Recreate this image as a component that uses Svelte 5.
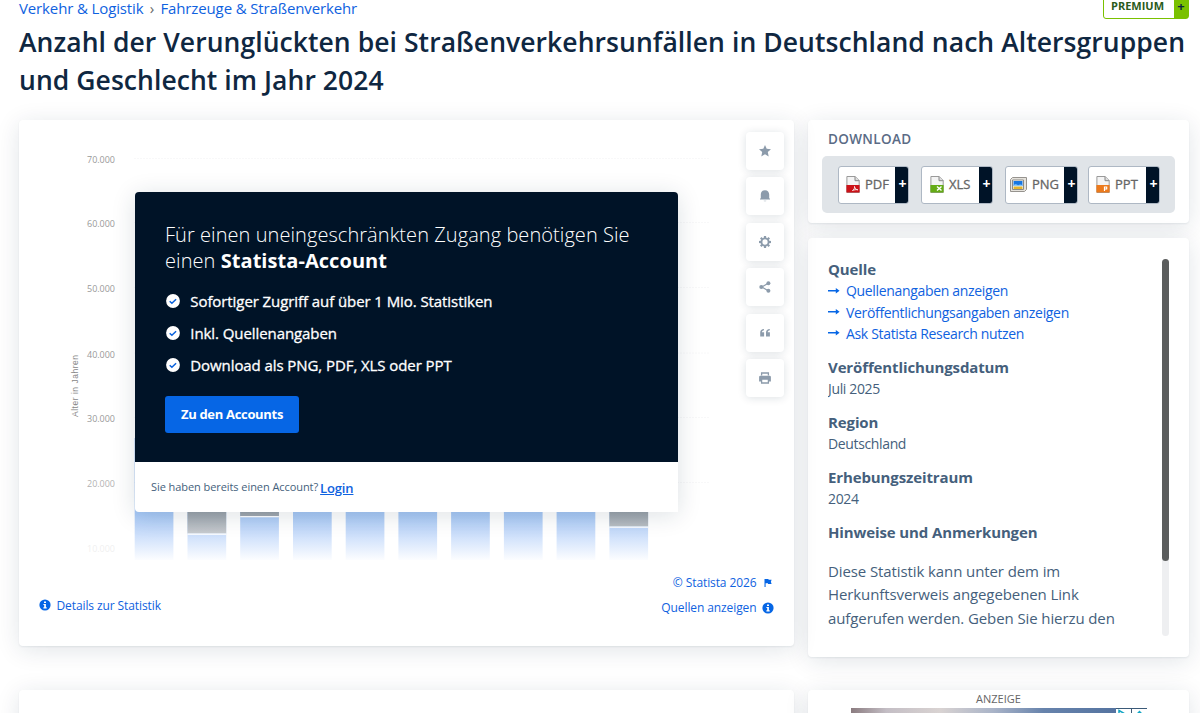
<script lang="ts">
  type Bar = { x: number; split: number; top: number };

  const ticks = [
    { label: "70.000", y: 40 },
    { label: "60.000", y: 104 },
    { label: "50.000", y: 169 },
    { label: "40.000", y: 234.5 },
    { label: "30.000", y: 299 },
    { label: "20.000", y: 364 },
    { label: "10.000", y: 428.5 },
  ];

  // split: end of the upper (grey) segment, 0 when it lies behind the dialog
  const bars: Bar[] = [
    { x: 115.7, split: 0, top: 318 },
    { x: 168.5, split: 413.5, top: 340 },
    { x: 221.2, split: 396, top: 340 },
    { x: 274, split: 0, top: 340 },
    { x: 326.7, split: 0, top: 340 },
    { x: 379.4, split: 0, top: 340 },
    { x: 432.1, split: 0, top: 340 },
    { x: 484.9, split: 0, top: 340 },
    { x: 537.6, split: 0, top: 340 },
    { x: 590.4, split: 406.5, top: 340 },
  ];

  const tools = ["star", "bell", "gear", "share", "quote", "print"];
  const formats = [
    { name: "PDF", color: "#cc1218", cls: "pdf" },
    { name: "XLS", color: "#65ab16", cls: "xls" },
    { name: "PNG", color: "#2e7fd6", cls: "png" },
    { name: "PPT", color: "#ec7a1c", cls: "ppt" },
  ];
  const benefits = [
    "Sofortiger Zugriff auf über 1 Mio. Statistiken",
    "Inkl. Quellenangaben",
    "Download als PNG, PDF, XLS oder PPT",
  ];
  const sourceLinks = [
    "Quellenangaben anzeigen",
    "Veröffentlichungsangaben anzeigen",
    "Ask Statista Research nutzen",
  ];
  const facts = [
    { title: "Veröffentlichungsdatum", value: "Juli 2025" },
    { title: "Region", value: "Deutschland" },
    { title: "Erhebungszeitraum", value: "2024" },
  ];
</script>

{#snippet info()}
  <svg width="12" height="12" viewBox="0 0 12 12">
    <circle cx="6" cy="6" r="5.6" fill="#0666e5" />
    <path d="M5 2.4h2v1.6H5zM4.4 5h2.5v3.2h.8v1.2H4.4V8.2h.8V6.1h-.8z" fill="#fff" />
  </svg>
{/snippet}

<div class="page">
  <header>
    <div class="top-row">
      <nav class="breadcrumb">
        <a href="#verkehr">Verkehr &amp; Logistik</a>
        <span class="sep">›</span>
        <a href="#fahrzeuge">Fahrzeuge &amp; Straßenverkehr</a>
      </nav>
      <div class="premium"><span class="premium-text">PREMIUM</span><span class="premium-plus">+</span></div>
    </div>
    <h1>
      Anzahl der Verunglückten bei Straßenverkehrsunfällen in Deutschland nach Altersgruppen<br />
      und Geschlecht im Jahr 2024
    </h1>
  </header>

  <div class="columns">
    <main>
      <section class="card chart-card">
        <svg class="chart" width="775" height="442" viewBox="0 0 775 442">
          <defs>
            <linearGradient id="upper" gradientUnits="userSpaceOnUse" x1="0" y1="318" x2="0" y2="440">
              <stop offset="0" stop-color="#5f6b77" />
              <stop offset="0.6" stop-color="#98a0a8" />
              <stop offset="1" stop-color="#fff" />
            </linearGradient>
            <linearGradient id="lower" gradientUnits="userSpaceOnUse" x1="0" y1="318" x2="0" y2="440">
              <stop offset="0" stop-color="#6fa4ea" />
              <stop offset="0.62" stop-color="#a7c8f5" />
              <stop offset="0.8" stop-color="#cee0fb" />
              <stop offset="1" stop-color="#fcfdff" />
            </linearGradient>
          </defs>
          {#each ticks as t, i}
            {#if i < 6}
              <line x1="115" x2="690" y1={t.y - 1.5} y2={t.y - 1.5} stroke="#f8f8f9" stroke-dasharray="2 1" />
            {/if}
            <text class="tick" x="96" y={t.y + 3.3} textLength="28" opacity={i < 5 ? 1 : i === 5 ? 0.75 : 0.15}>{t.label}</text>
          {/each}
          <text class="axis" transform="translate(58.5 297) rotate(-90)" textLength="62">Alter in Jahren</text>
          {#each bars as b}
            <rect x={b.x} y={b.top} width="38.7" height={440 - b.top} fill="url(#lower)" />
            {#if b.split}
              <rect x={b.x} y={b.top} width="38.7" height={b.split - b.top} fill="url(#upper)" />
              <rect x={b.x} y={b.split} width="38.7" height="1.3" fill="#fff" />
            {/if}
          {/each}
        </svg>

        <div class="tools">
          {#each tools as tool}
            <button class="tool" aria-label={tool}>
              <svg width="14" height="14" viewBox="0 0 14 14" fill="#8c9bab">
                {#if tool === "star"}
                  <path d="M7 1 8.700 4.800l4.300.4-3.200 2.900.9 4.300L7 10.200l-3.700 2.200.9-4.300L1 5.200l4.300-.4z" />
                {:else if tool === "bell"}
                  <path d="M7 1.200c-2.700 0-4.200 1.900-4.200 4.400v3.300l-.8 1v.5h10v-.5l-.8-1V5.600C11.200 3.100 9.700 1.200 7 1.200z" />
                  <path d="M5.600 11.400h2.800a1.400 1.100 0 0 1-2.800 0z" opacity=".45" />
                {:else if tool === "gear"}
                  <circle cx="7" cy="7" r="3.600" fill="none" stroke="#8c9bab" stroke-width="1.900" />
                  {#each [0, 45, 90, 135, 180, 225, 270, 315] as a}
                    <rect x="5.900" y="1" width="2.200" height="2" transform="rotate({a} 7 7)" />
                  {/each}
                {:else if tool === "share"}
                  <path d="M10.200 3.300 3.800 7l6.400 3.700" fill="none" stroke="#8c9bab" stroke-width="1.300" />
                  <circle cx="10.400" cy="3.200" r="2" /><circle cx="3.300" cy="7" r="2" /><circle cx="10.400" cy="10.800" r="2" />
                {:else if tool === "quote"}
                  <path d="M6 3v1.200C4.700 4.400 4 5.100 3.900 6.300h2.200V10.500H2.200V6.500C2.200 4.300 3.700 3.100 6 3zM11.800 3v1.200c-1.300.2-2 .9-2.100 2.100h2.200v4.200H8V6.500C8 4.300 9.500 3.100 11.800 3z" />
                {:else}
                  <path d="M3.600 4.400V2h6.800v2.400" fill="none" stroke="#8c9bab" stroke-width="1.300" />
                  <path d="M2.500 4.700h9a1.400 1.400 0 0 1 1.400 1.400v4.400h-2.200V7.900H3.300v2.600H1.100V6.100a1.400 1.400 0 0 1 1.400-1.400z" />
                  <path d="M3.600 8h6.800v4H3.600z" fill="none" stroke="#8c9bab" stroke-width="1.300" />
                {/if}
              </svg>
            </button>
          {/each}
        </div>

        <div class="dialog">
          <div class="dialog-main">
            <p class="lead">Für einen uneingeschränkten Zugang benötigen Sie<br />einen <b>Statista-Account</b></p>
            <ul>
              {#each benefits as benefit}
                <li>
                  <svg width="14" height="14" viewBox="0 0 14 14">
                    <circle cx="7" cy="7" r="6.900" fill="#fff" />
                    <path d="m3.700 7.200 2.200 2.100 4.200-4.100" fill="none" stroke="#0b62dc" stroke-width="1.500" />
                  </svg>
                  {benefit}
                </li>
              {/each}
            </ul>
            <button class="cta">Zu den Accounts</button>
          </div>
          <div class="dialog-foot">
            <span>Sie haben bereits einen Account?</span>
            <a href="#login">Login</a>
          </div>
        </div>

        <div class="chart-foot">
          <a class="details" href="#details">{@render info()} Details zur Statistik</a>
          <div class="chart-meta">
            <a href="#copyright">
              © Statista 2026
              <svg width="12" height="12" viewBox="0 0 12 12"><path d="M2.500 2h4v.8H9.600L8.900 4.800l.7 2.300H6v-.8H3.600V10H2.500z" fill="#0666e5" /></svg>
            </a>
            <a href="#quellen">Quellen anzeigen {@render info()}</a>
          </div>
        </div>
      </section>
      <section class="card next-card"></section>
    </main>

    <aside>
      <section class="card download">
        <h2>DOWNLOAD</h2>
        <div class="formats">
          {#each formats as f}
            <button class="format {f.cls}">
              {#if f.name === "PNG"}
                <svg width="17" height="15" viewBox="0 0 17 15">
                  <path d="M2.500.500h14v12l-2 2H.500v-12z" fill="#e5e2dc" stroke="#96938e" />
                  <path d="M2.500 3h11v9.500h-11z" fill="#fff" stroke="#8b8b86" />
                  <path d="M3.500 4h9v5h-9z" fill="#1676e2" />
                  <path d="M3.500 8.500c2-2 3-1 4.500-.300 1.500-1 3-1 4.500 0v1h-9z" fill="#8cc7f7" />
                  <path d="M3.500 9.500h9V12h-9z" fill="#e6b52c" />
                </svg>
              {:else}
                <svg width="14" height="17" viewBox="0 0 14 17">
                  <path d="M.900.500h8.300l4 4v12H.900z" fill="#f4f4f4" stroke="#9a9a9a" />
                  <path d="M9 .500v4.200h4.200" fill="#ddd" stroke="#888" />
                  <path d="M.400 9h13.200v7.500H.400z" fill={f.color} />
                  {#if f.name === "PDF"}
                    <path d="M6.500 14.500c1.800-1.200 2.200-2.500 2-4 .4 2 1.500 3 3.300 3.300-2-.3-3.500 0-5.300.7z" fill="none" stroke="#fff" stroke-width=".9" />
                  {:else if f.name === "XLS"}
                    <path d="m7 10.500 4.500 4m0-4L7 14.500" stroke="#fff" stroke-width="1.400" />
                  {:else}
                    <path d="M8.500 15v-4h2.200v2H8.500" fill="none" stroke="#fff" stroke-width="1.200" />
                  {/if}
                </svg>
              {/if}
              <span class="format-name">{f.name}</span>
              <span class="format-plus">+</span>
            </button>
          {/each}
        </div>
      </section>

      <section class="card facts">
        <div class="facts-scroll">
          <h3>Quelle</h3>
          <ul class="links">
            {#each sourceLinks as link}
              <li>
                <svg width="12" height="8" viewBox="0 0 12 8">
                  <path d="M0 3h7.800V1.100L11.600 3.800 7.800 6.500V4.600H0z" fill="#0666e5" />
                </svg>
                <a href="#quelle">{link}</a>
              </li>
            {/each}
          </ul>
          {#each facts as fact}
            <h3>{fact.title}</h3>
            <p class="value">{fact.value}</p>
          {/each}
          <h3>Hinweise und Anmerkungen</h3>
          <p class="note">Diese Statistik kann unter dem im<br />Herkunftsverweis angegebenen Link<br />aufgerufen werden. Geben Sie hierzu den<br />Code 46241-0010 in das Suchmenü ein.</p>
        </div>
        <div class="scrollbar"><div class="thumb"></div></div>
      </section>

      <section class="card ad">
        <span class="ad-label">ANZEIGE</span>
        <div class="ad-image">
          <svg width="31" height="10" viewBox="0 0 31 10">
            <path d="M0 0h31v10H0z" fill="#fff" />
            <path d="M0 .500h31M15.500 0v10" stroke="#3b5a78" />
            <path d="m3 2.500 7 4-7 4z" fill="none" stroke="#14a5c4" stroke-width="1.500" />
            <path d="M21 6.500 23.500 4 26 6.500" fill="none" stroke="#14a5c4" stroke-width="2" />
          </svg>
        </div>
      </section>
    </aside>
  </div>
</div>

<style>
  :global(body) { background: #fff; overflow: hidden; }
  .page {
    height: 713px; overflow: hidden; box-sizing: border-box; padding: 0 11px 0 19px;
    font-family: "Open Sans", "Liberation Sans", sans-serif; color: #455f7c; background: #fff;
  }
  a { color: #0f62e0; text-decoration: none; }
  h1, h2, h3, p, ul { margin: 0; padding: 0; }
  ul { list-style: none; }
  button { font-family: inherit; padding: 0; border: 0; }
  svg { display: block; flex: none; }

  header { height: 120px; }
  .top-row { display: flex; justify-content: space-between; height: 24px; }
  .breadcrumb { display: flex; font-size: 15px; line-height: 17px; letter-spacing: -0.13px; white-space: nowrap; }
  .sep { width: 17px; text-align: center; color: #666; }
  .premium {
    display: flex; box-sizing: border-box; width: 86px; height: 26px; margin-top: -7px;
    border: 1px solid #7ac100; border-radius: 3px; font-size: 11px; font-weight: 700; line-height: 24px; color: #2a5b1c;
  }
  .premium-text { flex: 1; padding-left: 7px; }
  .premium-plus { width: 14px; background: #7ac100; color: #0f2741; font-size: 13px; text-align: center; }
  h1 { font-size: 26.5px; font-weight: 600; line-height: 37.5px; letter-spacing: 0.06px; color: #0f2741; white-space: nowrap; }

  .columns { display: flex; gap: 14px; }
  main { width: 775px; display: flex; flex-direction: column; gap: 44px; }
  aside { width: 381px; display: flex; flex-direction: column; }
  .card {
    background: #fff; border-radius: 4px; box-sizing: border-box;
    box-shadow: 0 1px 2px rgba(15, 39, 65, 0.07), 0 4px 24px rgba(15, 39, 65, 0.12);
  }

  .chart-card { position: relative; height: 526px; }
  .tick { font-size: 9px; fill: #999; text-anchor: end; }
  .axis { font-family: "Liberation Sans", sans-serif; font-size: 8.5px; fill: #888; }
  .tools { position: absolute; top: 12px; right: 10px; display: flex; flex-direction: column; gap: 7.4px; }
  .tool {
    width: 38px; height: 38px; display: grid; place-items: center; background: #fff;
    border-radius: 4px; box-shadow: 0 1px 8px rgba(15, 39, 65, 0.14);
  }

  .dialog {
    position: absolute; left: 116px; top: 71.5px; width: 543px; background: #fff;
    border-radius: 4px 4px 0 4px; box-shadow: 0 3px 24px rgba(15, 39, 65, 0.14);
  }
  .dialog-main { height: 270.5px; box-sizing: border-box; padding: 30px; background: #001327; color: #fff; border-radius: 4px 4px 0 0; }
  .lead { font-size: 20px; font-weight: 300; line-height: 26px; letter-spacing: 0.06px; white-space: nowrap; }
  .lead b { font-weight: 700; }
  .dialog ul { margin-top: 12px; }
  .dialog li {
    display: flex; align-items: center; gap: 10.3px; height: 31.7px; padding-left: 1px;
    font-size: 15px; letter-spacing: -0.08px; -webkit-text-stroke: 0.3px #fff;
  }
  .cta {
    display: block; width: 134px; height: 37px; margin-top: 15.5px; padding-bottom: 2px;
    background: #0666e5; color: #fff; border-radius: 3px; font-size: 13px; font-weight: 700; letter-spacing: -0.32px;
  }
  .dialog-foot { display: flex; align-items: center; gap: 2px; height: 50px; padding-left: 16px; font-size: 11px; color: #455f7c; }
  .dialog-foot span { letter-spacing: -0.07px; padding-bottom: 1px; }
  .dialog-foot a { font-size: 13px; font-weight: 600; letter-spacing: -0.15px; text-decoration: underline; padding-top: 2px; }

  .chart-foot { display: flex; justify-content: space-between; align-items: flex-end; padding: 8px 20px 0; font-size: 12px; line-height: 25px; letter-spacing: -0.1px; }
  .chart-foot a { display: flex; align-items: center; justify-content: flex-end; gap: 5.5px; }
  .details { margin-bottom: 2.5px; }
  .next-card { height: 80px; }

  .download { height: 103px; padding: 9px 14px; }
  h2 { margin-left: 6px; font-size: 13.5px; line-height: 20px; font-weight: 600; color: #5a6b85; letter-spacing: 0.35px; }
  .formats { display: flex; align-items: center; gap: 12px; height: 57px; margin-top: 7px; padding-left: 16px; background: #e0e4e8; border-radius: 5px; }
  .format {
    display: flex; align-items: center; box-sizing: border-box; height: 38px; padding-left: 7px;
    background: #fff; border: 1px solid #aeb8c4; border-radius: 3px; font-size: 13px; color: #666;
    -webkit-text-stroke: 0.3px #666; overflow: hidden;
  }
  .format.pdf { width: 71px; }
  .format.xls { width: 72px; padding-left: 8px; }
  .format.png { width: 73px; padding-left: 4px; }
  .format.ppt { width: 72px; margin-left: -2px; }
  .format-name { flex: 1; padding: 0 0 2px 5px; text-align: left; }
  .format-plus {
    width: 13px; height: 38px; line-height: 36px; text-indent: 2px; background: #001327; color: #fff;
    font-size: 14px; font-weight: 700; -webkit-text-stroke: 0;
  }

  .facts { display: flex; justify-content: space-between; height: 419px; margin-top: 15px; padding: 21px 20px; }
  .facts-scroll { height: 377px; overflow: hidden; white-space: nowrap; }
  .scrollbar { width: 7px; height: 377px; background: #eeeff1; border-radius: 4px; }
  .thumb { height: 302px; background: #5b5d5d; border-radius: 4px; }
  h3 { font-size: 15px; line-height: 21px; font-weight: 700; color: #455f7c; letter-spacing: -0.12px; }
  .links li { display: flex; align-items: center; gap: 6px; height: 21.4px; font-size: 14px; letter-spacing: -0.33px; }
  .links { margin-bottom: 13px; }
  .value { font-size: 14px; line-height: 21px; margin-bottom: 12.8px; letter-spacing: -0.36px; }
  .note { font-size: 15px; line-height: 23.7px; margin-top: 17px; letter-spacing: -0.1px; }

  .ad { display: flex; flex-direction: column; align-items: center; height: 80px; margin-top: 33px; }
  .ad-label { font-size: 11px; line-height: 18px; color: #666; }
  .ad-image {
    display: flex; justify-content: flex-end; width: 296px; height: 60px;
    background: linear-gradient(90deg, #8b7c80, #c4bec5 12%, #d9d3d2 30%, #aab4c8 48%, #6783ac 65%, #4d6d9b);
  }
</style>
